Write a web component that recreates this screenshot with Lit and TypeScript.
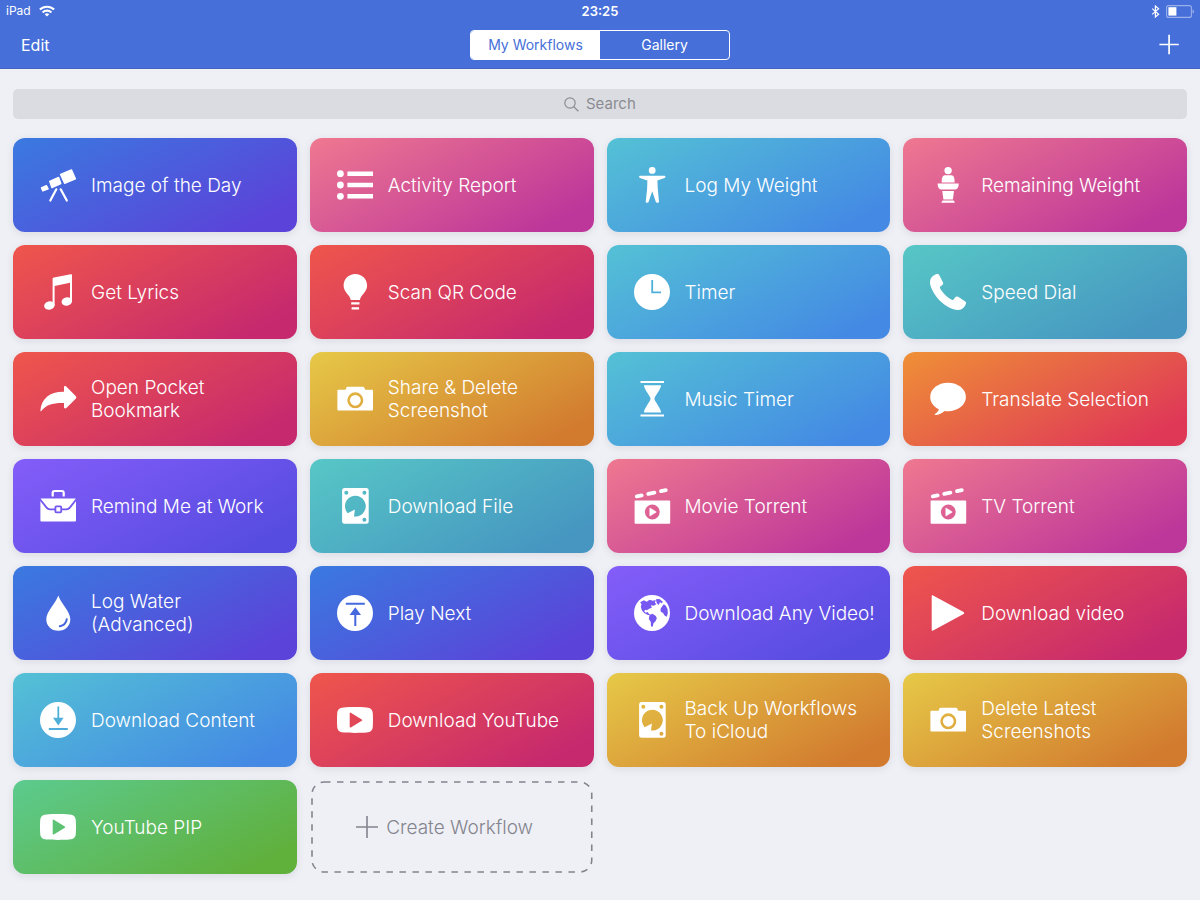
import { LitElement, html, svg, css, SVGTemplateResult } from "lit";
import { customElement, property, state } from "lit/decorators.js";
import { classMap } from "lit/directives/class-map.js";

const DISC = "M0 18a18 18 0 1 0 36 0a18 18 0 1 0-36 0Z";

/* Icons live in a 36 x 36 box. Cut-outs are black strokes and fills in a mask. */
const ICONS: Record<string, SVGTemplateResult> = {
  telescope: svg`
    <g stroke="currentColor" stroke-width="1.4" stroke-linejoin="round">
      <path d="M20.6 7.4 31.4 2.9 35.4 11.9 24.6 16.3Z"/>
      <path d="M9.7 14.3 18.6 10.5 20.8 16.6 11.9 20.6Z"/>
      <path d="M1.4 20.8 6.4 18.6 8.1 21.9 2.8 23.9Z"/>
    </g>
    <path d="M16.3 22.3 10.3 33.6M20.7 22.3 26.8 33.6" stroke="currentColor" stroke-width="2.2" stroke-linecap="round"/>`,
  list: svg`
    <circle cx="3.4" cy="6.7" r="3.4"/><circle cx="3.4" cy="18" r="3.4"/><circle cx="3.4" cy="29.3" r="3.4"/>
    <path d="M10.4 4.5H36v4.4H10.4ZM10.4 15.8H36v4.4H10.4ZM10.4 27.1H36v4.4H10.4Z"/>`,
  person: svg`
    <circle cx="18.2" cy="3.4" r="3.4"/>
    <path d="M6 8.7H30.5C31.8 8.7 31.8 10.5 30.5 10.9L23.4 13.4 23.8 22 25 34.8C25 36 22.2 36.2 21.9 35L18.2 24.2 14.6 35C14.2 36.2 11.6 36 11.7 34.8L13.1 22 13.4 13.4 6 10.9C4.8 10.5 4.8 8.7 6 8.7Z"/>`,
  podium: svg`
    <circle cx="18.1" cy="3.6" r="3.7"/>
    <path d="M11.7 15.4C11.7 10.6 12.4 8.3 15.4 8.3H20.9C23.9 8.3 24.6 10.6 24.6 15.4Z"/>
    <path d="M7.6 16.4H28.7C28.7 20.4 27.4 22.4 24.6 22.4H11.7C8.9 22.4 7.6 20.4 7.6 16.4Z"/>
    <path d="M12.3 23.9H24L22.9 32.4H13.4ZM12.6 33.4H23.7L25 35.8H11.3Z"/>`,
  music: svg`
    <path d="M12.6 5C12.6 4 13 3.6 14 3.4L30.6.2C31.6 0 32 .3 32 1.3V27.4H30V8.8L14.6 11.9V31.6H12.6Z"/>
    <ellipse cx="9.4" cy="31.5" rx="5.3" ry="4.2" transform="rotate(-14 9.4 31.5)"/>
    <ellipse cx="26.8" cy="27.5" rx="5.3" ry="4.2" transform="rotate(-14 26.8 27.5)"/>`,
  bulb: svg`
    <path d="M18.3 0C25 0 30.1 5 30.1 11.5C30.1 18.3 24 20.5 22.9 26H13.8C12.6 20.5 6.6 18.3 6.6 11.5C6.6 5 11.6 0 18.3 0Z"/>
    <path d="M14.2 28.3H22.5V30.5H14.2ZM14.6 33.2H22.1V35.4H14.6Z"/>`,
  clock: svg`<path fill-rule="evenodd" d="${DISC}M17.3 6h1.8v11.5h7.9v1.8h-9.7Z"/>`,
  phone: svg`
    <path d="M5.4.6C7.4-.2 8.6 0 9.2 1.1L12.9 8.2C13.5 9.4 13.2 10.4 12 11.3L10.6 12.3C9.8 13 9.8 13.8 10.4 14.9C13 19.2 17 23 21.2 25.6C22.3 26.2 23 26.2 23.8 25.2L25.2 23.3C26 22.3 27 22.1 28.1 22.8L35 27.2C36.3 28.1 36.3 29 35.8 30.2C34.2 34 31.5 36 27.8 36C21.8 36 13 31 7 23.5C2.5 17.8 0 12 0 8.3C0 4.5 2.2 1.9 5.4.6Z"/>`,
  share: svg`
    <path d="M.4 29.6C1.6 17.6 9.4 10.6 24 10.8V6C24 4.8 25.4 4.6 26.2 5.4L35.7 15C36.6 15.9 36.6 16.9 35.7 17.8L26.4 26.9C25.4 27.8 24 27.4 24 26.2V21.9C12.4 21.7 6.4 23.4 1.3 29.9C.9 30.5.3 30.4.4 29.6Z"/>`,
  camera: svg`
    <path fill-rule="evenodd" d="M1.2 8.8H8.6L9.4 6.6Q9.7 5.7 10.7 5.7H26Q27 5.7 27.3 6.6L28.1 8.8H35.2Q36 8.8 36 9.7V28.5Q36 29.4 35.2 29.4H1.2Q.4 29.4 .4 28.5V9.7Q.4 8.8 1.2 8.8ZM10.3 19.3a8 8 0 1 0 16 0a8 8 0 1 0-16 0Z"/>
    <circle cx="18.3" cy="19.3" r="5.4"/>`,
  hourglass: svg`
    <path d="M6.5 0H30V2H6.5ZM6.5 33.6H30V35.6H6.5ZM10.6 4.2H26.4Q27.4 4.2 27 5.2C25 11 21 14.6 20.4 17.8C21 21 25 24.6 27 30.4Q27.4 31.4 26.4 31.4H10.6Q9.6 31.4 10 30.4C12 24.6 16 21 16.6 17.8C16 14.6 12 11 10 5.2Q9.6 4.2 10.6 4.2Z"/>`,
  speech: svg`
    <path d="M18 1.8C28 1.8 35.9 8 35.9 16C35.9 24 28 30.2 18 30.2C16.8 30.2 15.7 30.1 14.6 30C12.2 32.4 9 33.9 5.2 33.9C4.5 33.9 4.4 33.4 5 33C7.4 31.4 8.6 29.6 8.9 28.2C3.5 25.6.2 21.2.2 16C.2 8 8 1.8 18 1.8Z"/>`,
  briefcase: svg`
    <mask id="cut-briefcase" maskUnits="userSpaceOnUse" x="0" y="0" width="37" height="36">
      <path fill="#fff" d="M0 0H37V36H0Z"/>
      <path d="M0 11.3 6.6 19.6Q8 21.4 10 21.4H15.2M36.4 11.3 29.8 19.6Q28.4 21.4 26.4 21.4H21.4" fill="none" stroke="#000" stroke-width="1.8"/>
      <rect x="15.4" y="18.4" width="5.8" height="6" rx=".8" fill="none" stroke="#000" stroke-width="1.8"/>
    </mask>
    <rect x=".4" y="10.6" width="35.6" height="23" rx="1" mask="url(#cut-briefcase)"/>
    <path d="M12.7 8.4V4.8Q12.7 3 14.5 3H21.9Q23.7 3 23.7 4.8V8.4" fill="none" stroke="currentColor" stroke-width="2.2"/>`,
  disk: svg`
    <path fill-rule="evenodd" d="M7.6 0H29.2Q31.7 0 31.7 2.5V33.2Q31.7 35.7 29.2 35.7H7.6Q5.1 35.7 5.1 33.2V2.5Q5.1 0 7.6 0ZM17 28.5A10.4 10.4 0 1 0 10.7 25.2L17.9 21.5ZM7.3 4.7a2 2 0 1 0 4 0a2 2 0 1 0-4 0ZM25.4 4.7a2 2 0 1 0 4 0a2 2 0 1 0-4 0ZM25.4 31.8a2 2 0 1 0 4 0a2 2 0 1 0-4 0Z"/>`,
  clapper: svg`
    <path fill-rule="evenodd" d="M1.4 12.4H35.4Q36.2 12.4 36.2 13.2V34.9Q36.2 35.7 35.4 35.7H1.4Q.6 35.7 .6 34.9V13.2Q.6 12.4 1.4 12.4ZM10.9 24a7.4 7.4 0 1 0 14.8 0a7.4 7.4 0 1 0-14.8 0Z"/>
    <path d="M15.5 20.4Q15.5 19.4 16.4 19.9L22 23.4Q22.8 24 22 24.6L16.4 28.1Q15.5 28.6 15.5 27.6Z"/>
    <path d="M2.8 8.4 7.7 7.4M14.2 5.9 20.4 4.6M27 3.1 31.8 2.1" stroke="currentColor" stroke-width="3.8" stroke-linecap="round"/>`,
  drop: svg`
    <mask id="cut-drop" maskUnits="userSpaceOnUse" x="0" y="0" width="36" height="36">
      <path fill="#fff" d="M0 0H36V36H0Z"/>
      <path d="M26.8 24.2C26.2 28 23.6 30.6 19.8 31.2" fill="none" stroke="#000" stroke-width="2" stroke-linecap="round"/>
    </mask>
    <path mask="url(#cut-drop)" d="M18.3.6C20.6 8 30.3 16.6 30.3 24.2C30.3 30.9 25.2 35.8 18.3 35.8C11.4 35.8 6.3 30.9 6.3 24.2C6.3 16.6 16 8 18.3.6Z"/>`,
  upload: svg`
    <path fill-rule="evenodd" d="${DISC}M8.8 7.8H27.8V9.7H8.8ZM18.3 12.2 24 20H19.3V31H17.3V20H12.6Z"/>`,
  download: svg`
    <path fill-rule="evenodd" d="${DISC}M8.8 26.1H27.8V28H8.8ZM18.3 23.4 13 15.8H17.4V4.4H19.2V15.8H23.6Z"/>`,
  globe: svg`
    <mask id="cut-globe" maskUnits="userSpaceOnUse" x="0" y="0" width="36" height="36">
      <path fill="#fff" d="M0 0H36V36H0Z"/>
      <g fill="#000" transform="scale(.3333) translate(-100.5 -748)">
        <path d="M119 770 130 764 139 768 147 762 157 765 166 763 163 771 168 775 160 780 151 779 154 786 146 789 139 794 134 792 131 797 136 801 142 799 145 804 150 808 142 808 131 802 124 794 121 783 123 776Z"/>
        <path d="M147 808 156 804 166 811 169 818 165 827 159 833 157 842 153 844 151 838 151 829 145 820Z"/>
        <path d="M166 761 177 760 187 768 184 773 178 770 175 778 169 773Z"/>
        <path d="M184 783 190 776 196 780 201 790 202 802 199 813 193 810 187 801 181 798 180 790Z"/>
      </g>
    </mask>
    <circle cx="18" cy="18" r="18" mask="url(#cut-globe)"/>`,
  play: svg`<path d="M1.7 1.2Q1.7-.4 3.1.4L33.6 17.1Q35 18 33.6 18.9L3.1 35.6Q1.7 36.4 1.7 34.8Z"/>`,
  youtube: svg`
    <path fill-rule="evenodd" d="M6.5 5.4C13 4.9 23 4.9 29.5 5.4C33.8 5.8 35.6 7.4 35.8 11.4C36.1 16 36.1 20 35.8 24.6C35.6 28.6 33.8 30.2 29.5 30.6C23 31.1 13 31.1 6.5 30.6C2.2 30.2.4 28.6.2 24.6C-.1 20-.1 16 .2 11.4C.4 7.4 2.2 5.8 6.5 5.4ZM12.7 11.4V24.8Q12.7 26 13.8 25.4L24.8 18.8Q25.8 18.1 24.8 17.4L13.8 10.8Q12.7 10.2 12.7 11.4Z"/>`,
};

interface Workflow {
  name: string;
  icon: string;
  tint: string;
}

const WORKFLOWS: Workflow[] = [
  { name: "Image of the Day", icon: "telescope", tint: "blue" },
  { name: "Activity Report", icon: "list", tint: "pink" },
  { name: "Log My Weight", icon: "person", tint: "cyan" },
  { name: "Remaining Weight", icon: "podium", tint: "pink" },
  { name: "Get Lyrics", icon: "music", tint: "red" },
  { name: "Scan QR Code", icon: "bulb", tint: "red" },
  { name: "Timer", icon: "clock", tint: "cyan" },
  { name: "Speed Dial", icon: "phone", tint: "teal" },
  { name: "Open Pocket\nBookmark", icon: "share", tint: "red" },
  { name: "Share & Delete\nScreenshot", icon: "camera", tint: "yellow" },
  { name: "Music Timer", icon: "hourglass", tint: "cyan" },
  { name: "Translate Selection", icon: "speech", tint: "orange" },
  { name: "Remind Me at Work", icon: "briefcase", tint: "purple" },
  { name: "Download File", icon: "disk", tint: "teal" },
  { name: "Movie Torrent", icon: "clapper", tint: "pink" },
  { name: "TV Torrent", icon: "clapper", tint: "pink" },
  { name: "Log Water\n(Advanced)", icon: "drop", tint: "blue" },
  { name: "Play Next", icon: "upload", tint: "blue" },
  { name: "Download Any Video!", icon: "globe", tint: "purple" },
  { name: "Download video", icon: "play", tint: "red" },
  { name: "Download Content", icon: "download", tint: "cyan" },
  { name: "Download YouTube", icon: "youtube", tint: "red" },
  { name: "Back Up Workflows\nTo iCloud", icon: "disk", tint: "yellow" },
  { name: "Delete Latest\nScreenshots", icon: "camera", tint: "yellow" },
  { name: "YouTube PIP", icon: "youtube", tint: "green" },
];

@customElement("workflow-tile")
export class WorkflowTile extends LitElement {
  @property() name = "";
  @property() icon = "";
  @property() tint = "blue";

  static styles = css`
    :host { display: block; min-width: 0; }
    .tile {
      display: flex;
      align-items: center;
      gap: 15px;
      box-sizing: border-box;
      width: 100%;
      min-height: 94px;
      margin: 0;
      padding: 0 8px 0 27px;
      border: 0;
      border-radius: 12px;
      background: linear-gradient(152deg, var(--from), var(--to) 88%);
      box-shadow: 0 2px 8px rgba(20, 20, 60, 0.09);
      color: #fff;
      font: inherit;
      text-align: left;
      cursor: pointer;
    }
    .icon { flex: none; width: 36px; height: 36px; fill: currentColor; overflow: visible; }
    .name { white-space: pre-line; min-width: 0; }
    .blue { --from: #3a7ae0; --to: #5b43d9; }
    .pink { --from: #ef7890; --to: #bd369a; }
    .cyan { --from: #54c1d5; --to: #448ae4; }
    .red { --from: #ef564b; --to: #c6296e; }
    .teal { --from: #57c7c6; --to: #4696c1; }
    .yellow { --from: #e6c947; --to: #d27b2f; }
    .orange { --from: #ef9036; --to: #df3857; }
    .purple { --from: #845df9; --to: #574ce0; }
    .green { --from: #5ccb8f; --to: #60b03c; }
  `;

  render() {
    return html`
      <button class="tile ${this.tint}" type="button">
        <svg class="icon" viewBox="0 0 36 36" aria-hidden="true">${ICONS[this.icon]}</svg>
        <span class="name">${this.name}</span>
      </button>
    `;
  }
}

@customElement("app-root")
export class AppRoot extends LitElement {
  @state() private tab = "My Workflows";

  static styles = css`
    :host {
      display: block;
      min-height: 100vh;
      background: #eff0f5;
      font-family: Inter, "Liberation Sans", sans-serif;
      font-size: 19px;
      font-weight: 300;
      line-height: 23px;
      color: #fff;
    }
    button { font: inherit; color: inherit; cursor: pointer; }
    .top { background: #466fd9; border-bottom: 1px solid #4763bd; }
    .status, .nav {
      display: grid;
      grid-template-columns: 1fr auto 1fr;
      align-items: center;
    }
    .status {
      height: 22px;
      padding: 0 6px;
      font-size: 12px;
      font-weight: 400;
      line-height: 22px;
    }
    .left, .right { display: flex; align-items: center; gap: 8px; }
    .right { justify-content: flex-end; gap: 6px; }
    .time { font-size: 13px; font-weight: 600; }
    .nav { height: 46px; padding: 0 21px; }
    .plain { display: flex; margin: 0; padding: 0; border: 0; background: none; font-size: 16px; font-weight: 400; }
    .segments {
      display: grid;
      grid-template-columns: 1fr 1fr;
      width: 260px;
      height: 30px;
      box-sizing: border-box;
      border: 1px solid #fff;
      border-radius: 4px;
      overflow: hidden;
    }
    .segment { margin: 0; padding: 0; border: 0; background: none; font-size: 14px; font-weight: 400; line-height: 20px; }
    .segment.active { background: #fff; color: #466fd9; }
    .content { padding: 20px 13px 26px; }
    .search {
      display: flex;
      align-items: center;
      justify-content: center;
      gap: 7px;
      height: 30px;
      border-radius: 5px;
      background: #dbdce1;
      color: #8b8c92;
      cursor: text;
    }
    .field {
      width: 50px;
      margin: 0;
      padding: 0;
      border: 0;
      outline: 0;
      background: none;
      color: #3c3d44;
      font: inherit;
      font-size: 15px;
      font-weight: 400;
      line-height: 20px;
    }
    .field::placeholder { color: #8b8c92; opacity: 1; }
    .grid {
      display: grid;
      grid-template-columns: repeat(4, minmax(0, 1fr));
      gap: 13px;
      margin-top: 19px;
    }
    .create {
      position: relative;
      display: flex;
      align-items: center;
      justify-content: center;
      gap: 8px;
      min-height: 94px;
      margin: 0;
      padding: 0 20px 0 6px;
      border: 0;
      background: none;
      color: #83848e;
    }
    .outline { position: absolute; inset: 0; width: 100%; height: 100%; }
    .dashes {
      x: 2px;
      y: 2px;
      width: calc(100% - 4px);
      height: calc(100% - 4px);
      fill: none;
      stroke: currentColor;
      stroke-width: 1.6px;
      stroke-dasharray: 6.5 6.5;
    }
  `;

  private segment(name: string) {
    const active = this.tab === name;
    return html`<button
      type="button"
      role="tab"
      aria-selected=${active ? "true" : "false"}
      class=${classMap({ segment: true, active })}
      @click=${() => (this.tab = name)}
    >${name}</button>`;
  }

  render() {
    return html`
      <header class="top">
        <div class="status">
          <div class="left">
            <span>iPad</span>
            <svg width="16" height="12" viewBox="0 0 16 12" fill="none" stroke="#fff" stroke-width="2.1" aria-hidden="true">
              <path d="M.9 4.6A10.2 10.2 0 0 1 15.1 4.6M3.6 7.4A6.3 6.3 0 0 1 12.4 7.4"/>
              <path d="M8 11.6 5.7 9.3A3.3 3.3 0 0 1 10.3 9.3Z" fill="#fff" stroke="none"/>
            </svg>
          </div>
          <span class="time">23:25</span>
          <div class="right">
            <svg width="9" height="13" viewBox="0 0 9 13" fill="none" stroke="#fff" stroke-width="1.2" aria-hidden="true">
              <path d="M1.2 3.6 7.6 9.3 4.4 12V1L7.6 3.7 1.2 9.4"/>
            </svg>
            <svg width="28" height="13" viewBox="0 0 28 13" aria-hidden="true">
              <rect x=".6" y=".6" width="24.8" height="11.8" rx="2" fill="none" stroke="#fff" stroke-opacity=".45" stroke-width="1.1"/>
              <rect x="2.4" y="2.2" width="8" height="8.4" fill="#fff"/>
              <path d="M26.6 4.4Q28 5 28 6.5Q28 8 26.6 8.6Z" fill="#fff" fill-opacity=".5"/>
            </svg>
          </div>
        </div>
        <nav class="nav">
          <div class="left"><button class="plain" type="button">Edit</button></div>
          <div class="segments" role="tablist">
            ${this.segment("My Workflows")}${this.segment("Gallery")}
          </div>
          <div class="right">
            <button class="plain" type="button" aria-label="New workflow">
              <svg width="20" height="22" viewBox="0 0 20 22" stroke="#fff" stroke-width="1.7" aria-hidden="true">
                <path d="M.4 10.5H19.8M10.1 .8V20.2"/>
              </svg>
            </button>
          </div>
        </nav>
      </header>
      <main class="content">
        <label class="search">
          <svg width="15" height="15" viewBox="0 0 15 15" fill="none" stroke="currentColor" stroke-width="1.2" aria-hidden="true">
            <circle cx="6" cy="6" r="5.2"/><path d="M9.8 9.8 14.4 14.2"/>
          </svg>
          <input class="field" type="text" placeholder="Search" aria-label="Search" />
        </label>
        <div class="grid">
          ${WORKFLOWS.map(
            (w) => html`<workflow-tile .name=${w.name} .icon=${w.icon} .tint=${w.tint}></workflow-tile>`
          )}
          <button class="create" type="button">
            <svg class="outline" aria-hidden="true"><rect class="dashes" rx="12"/></svg>
            <svg width="22" height="22" viewBox="0 0 22 22" stroke="currentColor" stroke-width="1.6" aria-hidden="true">
              <path d="M0 11H22M11 0V22"/>
            </svg>
            <span>Create Workflow</span>
          </button>
        </div>
      </main>
    `;
  }
}
